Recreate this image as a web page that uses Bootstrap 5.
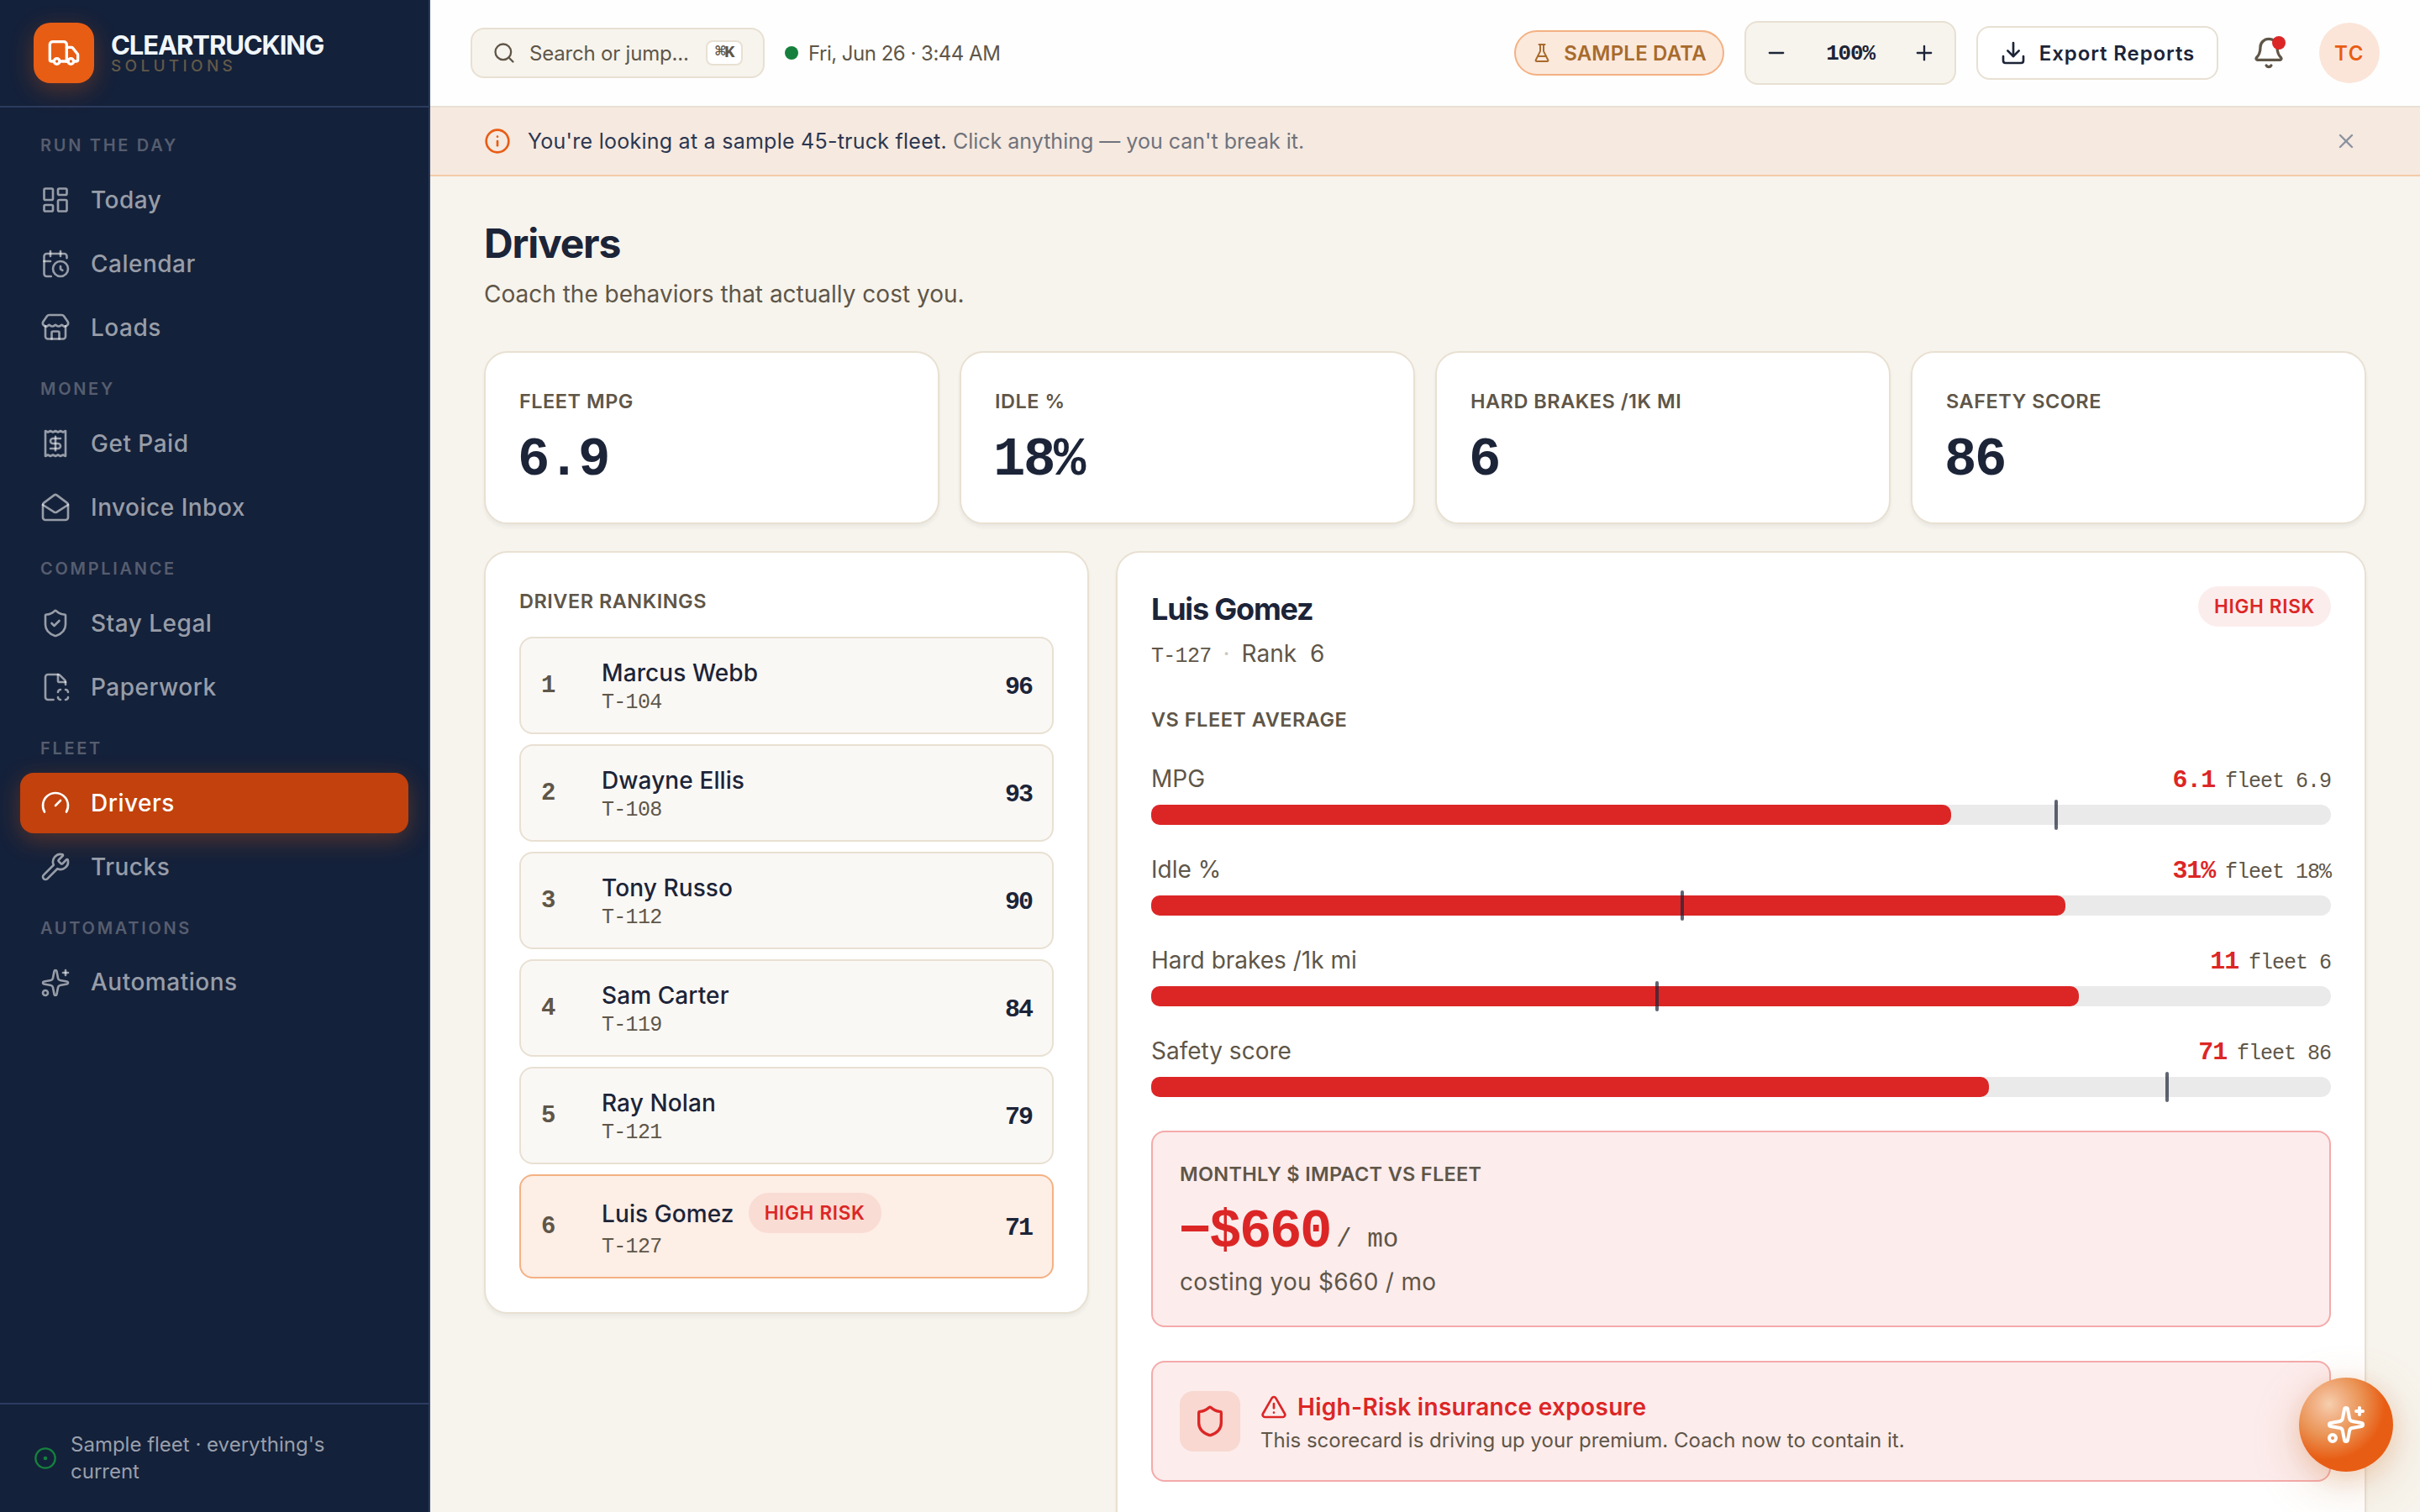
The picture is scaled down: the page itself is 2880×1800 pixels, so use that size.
<!DOCTYPE html>
<html lang="en">
<head>
  <meta charset="UTF-8">
  <meta name="viewport" content="width=device-width, initial-scale=1.0">
  <title>Clear Trucking Solutions | Drivers</title>

  <!-- Bootstrap CSS Link -->
  <link href="https://cdn.jsdelivr.net/npm/bootstrap@5.3.3/dist/css/bootstrap.min.css" rel="stylesheet">

  <style>
    :root {
      --navy: #14213a;
      --navy-line: #2b3c60;
      --ink: #1c2438;
      --muted: #5f5648;
      --line: #e8e0d2;
      --cream: #f7f4ed;
      --orange: #e85d14;
      --red: #dc2626;
    }
    body {
      font-family: Inter, "Liberation Sans", sans-serif;
      font-size: 28px;
      line-height: 1.4;
      color: var(--ink);
      background: var(--cream);
      height: 100vh;
      overflow: hidden;
    }
    svg { fill: none; stroke: currentColor; stroke-width: 2; stroke-linecap: round; stroke-linejoin: round; flex-shrink: 0; display: block; }
    .mono { font-family: "Liberation Mono", monospace; }
    .muted { color: var(--muted); }
    .text-red { color: var(--red); }
    .i24 { width: 24px; height: 24px; }
    .i28 { width: 28px; height: 28px; }
    .i32 { width: 32px; height: 32px; }
    .i40 { width: 40px; height: 40px; }
    .drop { padding-top: 2px; }

    /* Sidebar */
    .sidebar { width: 512px; background: var(--navy); border-right: 2px solid var(--navy-line); flex-shrink: 0; }
    .brand { height: 128px; padding-left: 40px; gap: 20px; border-bottom: 2px solid var(--navy-line); }
    .brand-logo { width: 72px; height: 72px; border-radius: 20px; background: var(--orange); color: #fff; box-shadow: 0 8px 28px rgba(232,93,20,.3); }
    .brand-name { font-size: 31px; line-height: 31px; font-weight: 700; letter-spacing: -1.1px; color: #f0f6fa; }
    .brand-sub { font-size: 19px; line-height: 19px; font-weight: 500; letter-spacing: 4.3px; color: #635949; }
    .side-menu { padding: 0 24px; }
    .side-label { height: 62px; padding: 19px 0 0 24px; font-size: 20px; line-height: 28px; font-weight: 600; letter-spacing: 2.7px; color: #565d6f; }
    .side-label.first { height: 74px; padding-top: 31px; }
    .side-link { height: 72px; margin-bottom: 4px; padding: 0 24px; gap: 24px; border-radius: 16px; font-size: 28px; font-weight: 500; letter-spacing: .5px; color: rgba(255,255,255,.56); text-decoration: none; }
    .side-link svg { width: 36px; height: 36px; stroke-width: 1.75; }
    .side-link.active { background: #c2410c; color: #fff; box-shadow: 0 8px 28px rgba(232,93,20,.3); }
    .side-foot { height: 130px; padding: 0 96px 0 40px; gap: 16px; border-top: 2px solid var(--navy-line); font-size: 24px; line-height: 32px; color: #999fab; }
    .side-foot svg { color: #15803d; }

    /* Top bar */
    .topbar { height: 128px; padding: 0 48px; background: #fefefe; border-bottom: 2px solid var(--line); }
    .search-box { width: 350px; height: 60px; padding: 0 24px; gap: 16px; background: var(--cream); border: 2px solid var(--line); border-radius: 16px; font-size: 24px; letter-spacing: -.2px; color: var(--muted); }
    .key-hint { height: 30px; width: 44px; background: #fff; border: 2px solid var(--line); border-radius: 8px; font-size: 21px; letter-spacing: -1.5px; line-height: 26px; font-weight: 600; }
    .live-dot { width: 16px; height: 16px; background: #15803d; margin: 0 12px 0 24px; }
    .clock { font-size: 24px; letter-spacing: -.5px; color: var(--muted); }
    .top-tools { gap: 24px; }
    .sample-pill { width: 250px; height: 54px; border: 2px solid #f4b183; background: #fbe9dc; color: #a86b2d; font-size: 24px; font-weight: 600; gap: 14px; letter-spacing: .2px; }
    .zoom-ctl { width: 252px; height: 76px; padding: 0 22px; background: var(--cream); border: 2px solid var(--line); border-radius: 16px; font-size: 26px; letter-spacing: -1.2px; font-weight: 700; }
    .export-btn { width: 288px; height: 64px; gap: 15px; padding: 0; background: #fff; border: 2px solid var(--line); border-radius: 16px; font-size: 24px; font-weight: 600; letter-spacing: .9px; color: var(--ink); }
    .bell { width: 72px; color: var(--muted); }
    .bell-dot { width: 16px; height: 16px; background: var(--red); top: 0; right: 16px; }
    .avatar { width: 72px; height: 72px; background: #fbe5d8; color: var(--orange); font-size: 24px; font-weight: 600; letter-spacing: 1.5px; }

    /* Sample notice */
    .notice { height: 82px; padding: 0 74px 0 64px; gap: 20px; background: #f6e9e0; border-bottom: 2px solid #f5cba7; font-size: 25px; color: #6f737b; }
    .notice b { font-weight: 400; letter-spacing: .25px; color: #2b3750; }
    .notice-icon { color: var(--orange); }
    .notice-close { color: #8c92a0; }

    /* Content */
    .content { padding: 50px 64px 0; }
    .page-title { font-size: 48px; line-height: 60px; font-weight: 700; letter-spacing: -1.2px; margin: 0 0 10px; }
    .page-sub { font-size: 28px; line-height: 40px; margin-bottom: 48px; }
    .panel { background: #fff; border: 2px solid var(--line); border-radius: 28px; padding: 40px; box-shadow: 0 4px 4px rgba(20,33,58,.05); }
    .caps { font-size: 23.5px; line-height: 32px; font-weight: 600; letter-spacing: .5px; padding-top: 2px; color: var(--muted); }
    .big-num { font-size: 64px; line-height: 72px; font-weight: 700; letter-spacing: -2.4px; margin-left: -2px; }

    .stats { display: grid; grid-template-columns: repeat(4, 1fr); gap: 24px; margin-bottom: 32px; }
    .stat { height: 206px; }
    .stat .big-num { margin-top: 18px; }

    .board { display: grid; grid-template-columns: 720px 1fr; gap: 32px; align-items: start; }
    .rank-list { gap: 12px; margin-top: 26px; }
    .rank-row { height: 116px; padding: 3px 24px 0; background: #faf8f5; border: 2px solid var(--line); border-radius: 16px; }
    .rank-row.picked { height: 124px; background: #fdeee6; border-color: #f4b183; }
    .rank-pos { width: 72px; font-size: 29px; font-weight: 700; color: var(--muted); }
    .rank-name { font-weight: 500; line-height: 38px; gap: 17px; letter-spacing: .1px; }
    .rank-unit { font-size: 25px; line-height: 34px; letter-spacing: -.7px; }
    .rank-score { font-size: 30px; font-weight: 700; letter-spacing: -2px; }
    .risk { height: 48px; width: 158px; background: #fceded; color: var(--red); font-size: 22.5px; font-weight: 600; letter-spacing: .7px; border-radius: 24px; }
    .picked .risk { background: #f9dcd3; margin-top: -2px; }

    /* Driver detail */
    .detail { min-height: 1200px; }
    .driver-name { font-size: 36px; line-height: 48px; font-weight: 700; letter-spacing: -1.2px; margin: 3px 0 0; }
    .sub-line { height: 40px; line-height: 40px; margin-top: 9px; }
    .sub-line .sep { color: #cfc9c0; margin: 0 14px; }
    .rank-six { margin-left: 16px; }
    .vs-label { margin: 41px 0 34px; }
    .metric { height: 108px; }
    .metric-top { height: 51px; line-height: 40px; }
    .metric-val { font-size: 30px; letter-spacing: -1.2px; font-weight: 700; color: var(--red); margin-right: 12px; }
    .metric-avg { font-size: 25px; letter-spacing: -1px; }
    .track { height: 24px; border-radius: 12px; background: #eaeaea; }
    .track-fill { height: 24px; border-radius: 10px; background: var(--red); }
    .track-tick { top: -6px; width: 4px; height: 36px; border-radius: 2px; background: rgba(28,36,56,.7); margin-left: -2px; }
    .alert-box { background: #fcecec; border: 2px solid #f4aaaa; border-radius: 16px; padding: 0 32px; }
    .impact { height: 234px; padding-top: 32px; margin-top: 7px; }
    .impact .caps { letter-spacing: .3px; }
    .impact-line { height: 74px; margin-top: 17px; }
    .impact-line .big-num { margin-left: -1px; }
    .per-mo { font-size: 31px; margin-left: 7px; }
    .cost-line { line-height: 40px; margin-top: 1px; letter-spacing: .3px; }
    .exposure { height: 144px; margin-top: 40px; gap: 24px; }
    .exp-body { padding-top: 3px; }
    .exp-title { font-weight: 600; line-height: 40px; gap: 12px; letter-spacing: .3px; }
    .exp-text { font-size: 24px; line-height: 36px; margin-top: 2px; }
    .shield-tile { width: 72px; height: 72px; border-radius: 16px; background: #f8d8d0; color: var(--red); }

    .assist { right: 32px; bottom: 48px; width: 112px; height: 112px; color: #fff; z-index: 5;
      background: radial-gradient(circle at 32% 28%, #f6cfae 0, #f2b48a 14%, #ea9557 34%, var(--orange) 60%, #e85d14 82%, #d04f0e 100%);
      box-shadow: 0 16px 56px rgba(200,140,80,.32), 0 6px 28px rgba(232,93,20,.16); }
  </style>
</head>

<body>
<div class="d-flex vh-100">

  <!-- Sidebar -->
  <aside class="sidebar d-flex flex-column">
    <div class="brand d-flex align-items-center">
      <div class="brand-logo d-flex align-items-center justify-content-center">
        <svg class="i40" viewBox="0 0 24 24"><path d="M14 18V6a2 2 0 0 0-2-2H4a2 2 0 0 0-2 2v11a1 1 0 0 0 1 1h2"/><path d="M15 18H9"/><path d="M19 18h2a1 1 0 0 0 1-1v-3.65a1 1 0 0 0-.22-.624l-3.48-4.35A1 1 0 0 0 17.52 8H14"/><circle cx="17" cy="18" r="2"/><circle cx="7" cy="18" r="2"/></svg>
      </div>
      <div>
        <div class="brand-name">CLEARTRUCKING</div>
        <div class="brand-sub">SOLUTIONS</div>
      </div>
    </div>

    <nav class="side-menu flex-grow-1">
      <div class="side-label first">RUN THE DAY</div>
      <a class="side-link d-flex align-items-center" href="#"><svg viewBox="0 0 24 24"><rect width="7" height="9" x="3" y="3" rx="1"/><rect width="7" height="5" x="14" y="3" rx="1"/><rect width="7" height="9" x="14" y="12" rx="1"/><rect width="7" height="5" x="3" y="16" rx="1"/></svg><span class="drop">Today</span></a>
      <a class="side-link d-flex align-items-center" href="#"><svg viewBox="0 0 24 24"><path d="M16 14v2.2l1.6 1"/><path d="M16 2v4"/><path d="M21 7.5V6a2 2 0 0 0-2-2H5a2 2 0 0 0-2 2v14a2 2 0 0 0 2 2h3.5"/><path d="M3 10h5"/><path d="M8 2v4"/><circle cx="16" cy="16" r="6"/></svg><span class="drop">Calendar</span></a>
      <a class="side-link d-flex align-items-center" href="#"><svg viewBox="0 0 24 24"><path d="M15 21v-5a1 1 0 0 0-1-1h-4a1 1 0 0 0-1 1v5"/><path d="M17.774 10.31a1.12 1.12 0 0 0-1.549 0 2.5 2.5 0 0 1-3.451 0 1.12 1.12 0 0 0-1.548 0 2.5 2.5 0 0 1-3.452 0 1.12 1.12 0 0 0-1.549 0 2.5 2.5 0 0 1-3.77-3.248l2.889-4.184A2 2 0 0 1 7 2h10a2 2 0 0 1 1.653.873l2.895 4.192a2.5 2.5 0 0 1-3.774 3.244"/><path d="M4 10.95V19a2 2 0 0 0 2 2h12a2 2 0 0 0 2-2v-8.05"/></svg><span class="drop">Loads</span></a>

      <div class="side-label">MONEY</div>
      <a class="side-link d-flex align-items-center" href="#"><svg viewBox="0 0 24 24"><path d="M4 2v20l2-1 2 1 2-1 2 1 2-1 2 1 2-1 2 1V2l-2 1-2-1-2 1-2-1-2 1-2-1-2 1Z"/><path d="M16 8h-6a2 2 0 1 0 0 4h4a2 2 0 1 1 0 4H8"/><path d="M12 17.5v-11"/></svg><span class="drop">Get Paid</span></a>
      <a class="side-link d-flex align-items-center" href="#"><svg viewBox="0 0 24 24"><path d="M21.2 8.4c.5.38.8.97.8 1.6v10a2 2 0 0 1-2 2H4a2 2 0 0 1-2-2V10a2 2 0 0 1 .8-1.6l8-6a2 2 0 0 1 2.4 0l8 6Z"/><path d="m22 10-8.97 5.7a1.94 1.94 0 0 1-2.06 0L2 10"/></svg><span class="drop">Invoice Inbox</span></a>

      <div class="side-label">COMPLIANCE</div>
      <a class="side-link d-flex align-items-center" href="#"><svg viewBox="0 0 24 24"><path d="M20 13c0 5-3.5 7.5-7.66 8.95a1 1 0 0 1-.67-.01C7.5 20.5 4 18 4 13V6a1 1 0 0 1 1-1c2 0 4.5-1.2 6.24-2.72a1.17 1.17 0 0 1 1.52 0C14.51 3.81 17 5 19 5a1 1 0 0 1 1 1z"/><path d="m9 12 2 2 4-4"/></svg><span class="drop">Stay Legal</span></a>
      <a class="side-link d-flex align-items-center" href="#"><svg viewBox="0 0 24 24"><path d="M20 10V8a2.4 2.4 0 0 0-.706-1.706l-3.588-3.588A2.4 2.4 0 0 0 14 2H6a2 2 0 0 0-2 2v16a2 2 0 0 0 2 2h4.35"/><path d="M14 2v5a1 1 0 0 0 1 1h5"/><path d="M16 14a2 2 0 0 0-2 2"/><path d="M16 22a2 2 0 0 1-2-2"/><path d="M20 14a2 2 0 0 1 2 2"/><path d="M20 22a2 2 0 0 0 2-2"/></svg><span class="drop">Paperwork</span></a>

      <div class="side-label">FLEET</div>
      <a class="side-link active d-flex align-items-center" href="#"><svg viewBox="0 0 24 24"><path d="m12 14 4-4"/><path d="M3.34 19a10 10 0 1 1 17.32 0"/></svg><span class="drop">Drivers</span></a>
      <a class="side-link d-flex align-items-center" href="#"><svg viewBox="0 0 24 24"><path d="M14.7 6.3a1 1 0 0 0 0 1.4l1.6 1.6a1 1 0 0 0 1.4 0l3.106-3.105c.32-.322.863-.22.983.218a6 6 0 0 1-8.259 7.057l-7.91 7.91a1 1 0 0 1-2.999-3l7.91-7.91a6 6 0 0 1 7.057-8.259c.438.12.54.662.219.984z"/></svg><span class="drop">Trucks</span></a>

      <div class="side-label">AUTOMATIONS</div>
      <a class="side-link d-flex align-items-center" href="#"><svg viewBox="0 0 24 24"><path d="M11.017 2.814a1 1 0 0 1 1.966 0l1.051 5.558a2 2 0 0 0 1.594 1.594l5.558 1.051a1 1 0 0 1 0 1.966l-5.558 1.051a2 2 0 0 0-1.594 1.594l-1.051 5.558a1 1 0 0 1-1.966 0l-1.051-5.558a2 2 0 0 0-1.594-1.594l-5.558-1.051a1 1 0 0 1 0-1.966l5.558-1.051a2 2 0 0 0 1.594-1.594z"/><path d="M20 2v4"/><path d="M22 4h-4"/><circle cx="4" cy="20" r="2"/></svg><span>Automations</span></a>
    </nav>

    <div class="side-foot d-flex align-items-center">
      <svg class="i28" viewBox="0 0 24 24"><circle cx="12" cy="12" r="10"/><circle cx="12" cy="12" r="1"/></svg>
      <span>Sample fleet · everything's current</span>
    </div>
  </aside>

  <div class="flex-grow-1">

    <!-- Top bar -->
    <header class="topbar d-flex align-items-center">
      <div class="search-box d-flex align-items-center">
        <svg class="i28" viewBox="0 0 24 24"><circle cx="11" cy="11" r="8"/><path d="m21 21-4.3-4.3"/></svg>
        <span class="text-nowrap drop">Search or jump...</span>
        <span class="key-hint mono ms-auto text-center">⌘K</span>
      </div>
      <span class="live-dot rounded-circle"></span>
      <span class="clock drop">Fri, Jun 26 · 3:44 AM</span>

      <div class="top-tools d-flex align-items-center ms-auto">
        <span class="sample-pill rounded-pill d-flex align-items-center justify-content-center">
          <svg class="i24" viewBox="0 0 24 24"><path d="M10 2v7.527a2 2 0 0 1-.211.896L4.72 20.55a1 1 0 0 0 .9 1.45h12.76a1 1 0 0 0 .9-1.45l-5.069-10.127A2 2 0 0 1 14 9.527V2"/><path d="M8.5 2h7"/><path d="M7 16h10"/></svg>
          <span class="drop">SAMPLE DATA</span>
        </span>
        <div class="zoom-ctl d-flex align-items-center justify-content-between">
          <svg class="i28" viewBox="0 0 24 24"><path d="M5 12h14"/></svg>
          <span class="mono drop">100%</span>
          <svg class="i28" viewBox="0 0 24 24"><path d="M5 12h14"/><path d="M12 5v14"/></svg>
        </div>
        <button class="export-btn btn d-flex align-items-center justify-content-center">
          <svg class="i32" viewBox="0 0 24 24"><path d="M12 15V3"/><path d="M21 15v4a2 2 0 0 1-2 2H5a2 2 0 0 1-2-2v-4"/><path d="m7 10 5 5 5-5"/></svg>
          <span class="drop">Export Reports</span>
        </button>
        <div class="bell position-relative d-flex justify-content-center">
          <svg class="i40" viewBox="0 0 24 24"><path d="M10.268 21a2 2 0 0 0 3.464 0"/><path d="M3.262 15.326A1 1 0 0 0 4 17h16a1 1 0 0 0 .74-1.673C19.41 13.956 18 12.499 18 8A6 6 0 0 0 6 8c0 4.499-1.411 5.956-2.738 7.326"/></svg>
          <span class="bell-dot position-absolute rounded-circle"></span>
        </div>
        <div class="avatar rounded-circle d-flex align-items-center justify-content-center"><span class="drop">TC</span></div>
      </div>
    </header>

    <!-- Sample notice -->
    <div class="notice d-flex align-items-center">
      <svg class="i32 notice-icon" viewBox="0 0 24 24"><circle cx="12" cy="12" r="10"/><path d="M12 16v-4"/><path d="M12 8h.01"/></svg>
      <span><b>You're looking at a sample 45-truck fleet.</b> Click anything — you can't break it.</span>
      <svg class="i28 ms-auto notice-close" viewBox="0 0 24 24"><path d="M18 6 6 18"/><path d="m6 6 12 12"/></svg>
    </div>

    <!-- Page content -->
    <main class="content">
      <h1 class="page-title">Drivers</h1>
      <p class="page-sub muted">Coach the behaviors that actually cost you.</p>

      <div class="stats">
        <div class="panel stat"><div class="caps">FLEET MPG</div><div class="big-num mono">6.9</div></div>
        <div class="panel stat"><div class="caps">IDLE %</div><div class="big-num mono">18%</div></div>
        <div class="panel stat"><div class="caps">HARD BRAKES /1K MI</div><div class="big-num mono">6</div></div>
        <div class="panel stat"><div class="caps">SAFETY SCORE</div><div class="big-num mono">86</div></div>
      </div>

      <div class="board">
        <section class="panel">
          <div class="caps">DRIVER RANKINGS</div>
          <div class="rank-list d-flex flex-column" id="rankList"></div>
        </section>

        <section class="panel detail">
          <div class="d-flex justify-content-between align-items-start">
            <h2 class="driver-name">Luis Gomez</h2>
            <span class="risk d-flex align-items-center justify-content-center">HIGH RISK</span>
          </div>
          <div class="sub-line muted d-flex align-items-baseline">
            <span class="mono rank-unit">T-127</span><span class="sep">·</span><span>Rank</span><span class="rank-six">6</span>
          </div>
          <div class="caps vs-label">VS FLEET AVERAGE</div>
          <div id="metricList"></div>

          <div class="alert-box impact">
            <div class="caps">MONTHLY $ IMPACT VS FLEET</div>
            <div class="d-flex align-items-baseline impact-line">
              <span class="big-num mono text-red">−$660</span><span class="mono muted per-mo">/ mo</span>
            </div>
            <div class="muted cost-line">costing you $660 / mo</div>
          </div>

          <div class="alert-box exposure d-flex align-items-center">
            <div class="shield-tile d-flex align-items-center justify-content-center">
              <svg class="i40" viewBox="0 0 24 24"><path d="M20 13c0 5-3.5 7.5-7.66 8.95a1 1 0 0 1-.67-.01C7.5 20.5 4 18 4 13V6a1 1 0 0 1 1-1c2 0 4.5-1.2 6.24-2.72a1.17 1.17 0 0 1 1.52 0C14.51 3.81 17 5 19 5a1 1 0 0 1 1 1z"/></svg>
            </div>
            <div class="exp-body">
              <div class="exp-title text-red d-flex align-items-center">
                <svg class="i32" viewBox="0 0 24 24"><path d="m21.73 18-8-14a2 2 0 0 0-3.48 0l-8 14A2 2 0 0 0 4 21h16a2 2 0 0 0 1.73-3"/><path d="M12 9v4"/><path d="M12 17h.01"/></svg>
                High-Risk insurance exposure
              </div>
              <div class="exp-text muted">This scorecard is driving up your premium. Coach now to contain it.</div>
            </div>
          </div>
        </section>
      </div>
    </main>
  </div>
</div>

<!-- Assistant button -->
<button class="assist btn p-0 border-0 rounded-circle position-fixed d-flex align-items-center justify-content-center">
  <svg width="48" height="48" viewBox="0 0 24 24"><path d="M11.017 2.814a1 1 0 0 1 1.966 0l1.051 5.558a2 2 0 0 0 1.594 1.594l5.558 1.051a1 1 0 0 1 0 1.966l-5.558 1.051a2 2 0 0 0-1.594 1.594l-1.051 5.558a1 1 0 0 1-1.966 0l-1.051-5.558a2 2 0 0 0-1.594-1.594l-5.558-1.051a1 1 0 0 1 0-1.966l5.558-1.051a2 2 0 0 0 1.594-1.594z"/><path d="M20 2v4"/><path d="M22 4h-4"/><circle cx="4" cy="20" r="2"/></svg>
</button>

<script>
  const drivers = [
    { name: "Marcus Webb", unit: "T-104", score: 96 },
    { name: "Dwayne Ellis", unit: "T-108", score: 93 },
    { name: "Tony Russo", unit: "T-112", score: 90 },
    { name: "Sam Carter", unit: "T-119", score: 84 },
    { name: "Ray Nolan", unit: "T-121", score: 79 },
    { name: "Luis Gomez", unit: "T-127", score: 71, risk: true }
  ];

  const metrics = [
    { label: "MPG", value: "6.1", fleet: "6.9", fill: 67.8, tick: 76.7 },
    { label: "Idle %", value: "31%", fleet: "18%", fill: 77.5, tick: 45 },
    { label: "Hard brakes /1k mi", value: "11", fleet: "6", fill: 78.6, tick: 42.9 },
    { label: "Safety score", value: "71", fleet: "86", fill: 71, tick: 86.1 }
  ];

  let rows = "";
  drivers.forEach((driver, i) => {
    const badge = driver.risk ? `<span class="risk d-flex align-items-center justify-content-center">HIGH RISK</span>` : "";
    rows += `
      <div class="rank-row d-flex align-items-center ${driver.risk ? "picked" : ""}">
        <span class="rank-pos mono">${i + 1}</span>
        <div class="flex-grow-1">
          <div class="rank-name d-flex align-items-center">${driver.name}${badge}</div>
          <div class="rank-unit mono muted">${driver.unit}</div>
        </div>
        <span class="rank-score mono">${driver.score}</span>
      </div>`;
  });
  document.getElementById("rankList").innerHTML = rows;

  let bars = "";
  metrics.forEach(metric => {
    bars += `
      <div class="metric">
        <div class="metric-top d-flex align-items-baseline">
          <span class="muted me-auto">${metric.label}</span>
          <span class="metric-val mono">${metric.value}</span>
          <span class="metric-avg mono muted">fleet ${metric.fleet}</span>
        </div>
        <div class="track position-relative">
          <div class="track-fill" style="width: ${metric.fill}%"></div>
          <div class="track-tick position-absolute" style="left: ${metric.tick}%"></div>
        </div>
      </div>`;
  });
  document.getElementById("metricList").innerHTML = bars;
</script>

<!-- Bootstrap JS -->
<script src="https://cdn.jsdelivr.net/npm/bootstrap@5.3.3/dist/js/bootstrap.bundle.min.js"></script>

</body>
</html>
